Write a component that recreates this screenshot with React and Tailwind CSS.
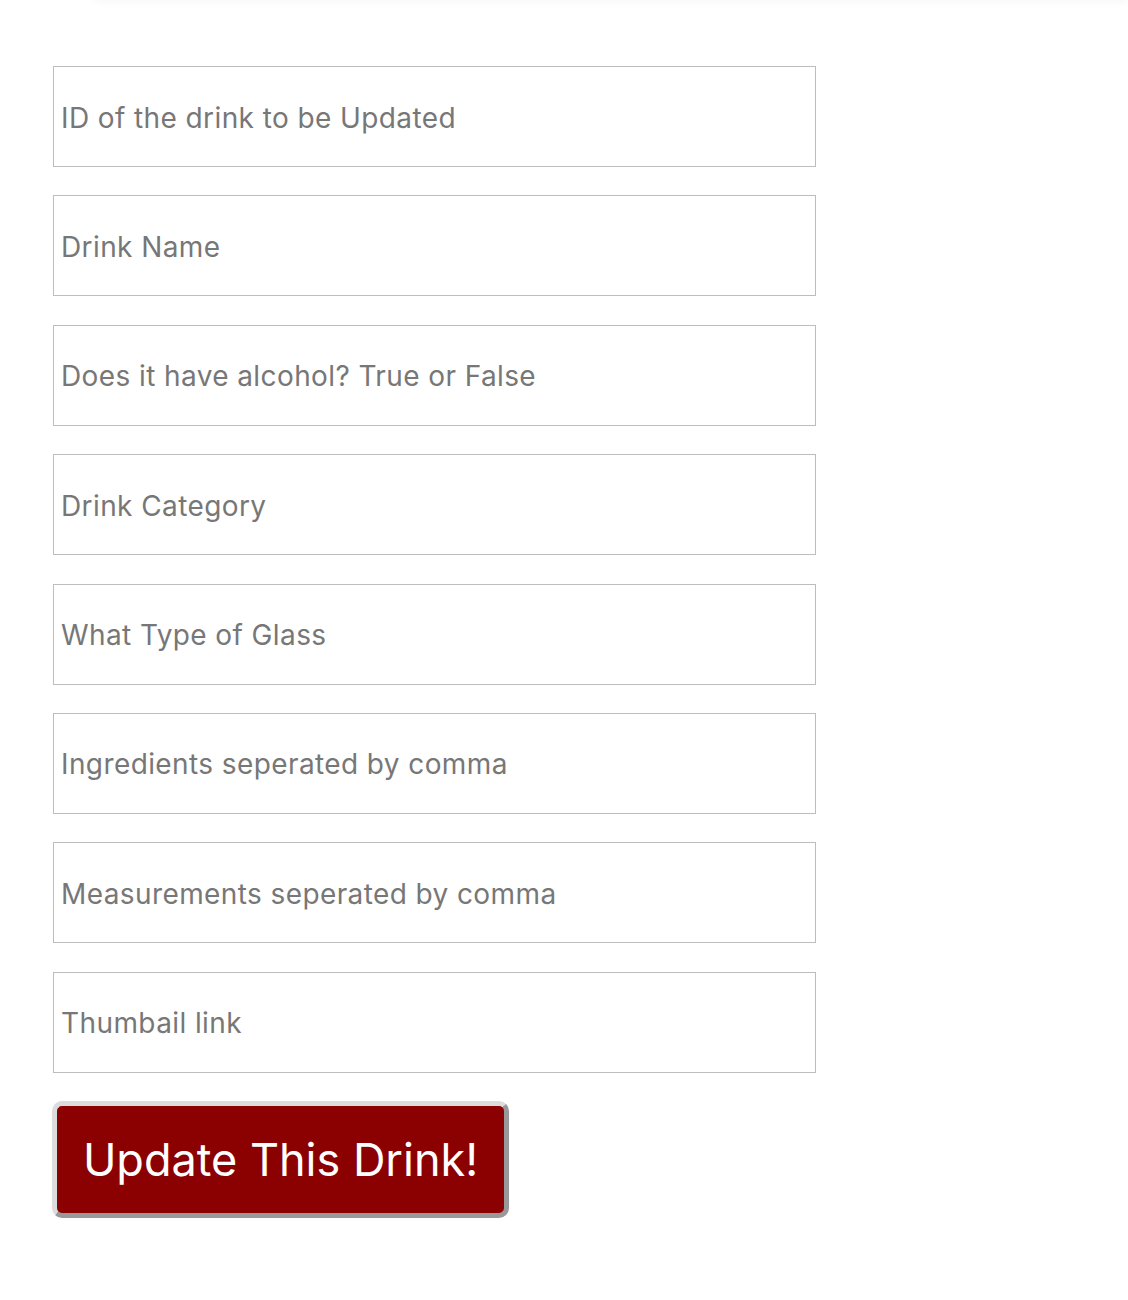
const fields = [
  "ID of the drink to be Updated",
  "Drink Name",
  "Does it have alcohol? True or False",
  "Drink Category",
  "What Type of Glass",
  "Ingredients seperated by comma",
  "Measurements seperated by comma",
  "Thumbail link",
];

export default function App() {
  return (
    <div className="min-h-[1300px] bg-white font-['Inter',sans-serif]">
      <div className="ml-[95px] h-[2px] -mt-[2px] bg-white shadow-[0_0_8px_rgba(0,0,0,0.12)]" />
      <form className="flex flex-col gap-[28.4px] pl-[53px] pt-[66px]">
        {fields.map((f) => (
          <input
            key={f}
            type="text"
            placeholder={f}
            className="h-[101px] w-[763px] border border-[#bdbdbd] bg-white pl-[7px] pr-[8px] pt-[2px] text-[28px] tracking-[0.4px] text-[#666] placeholder:text-[#777] outline-none"
          />
        ))}
        <button
          type="button"
          className="-ml-px h-[117px] w-[457px] rounded-[10px] border-[5px] border-t-[#dcdcdc] border-l-[#dcdcdc] border-b-[#999] border-r-[#999] bg-[#8b0000] text-[45px] text-white"
        >
          Update This Drink!
        </button>
      </form>
    </div>
  );
}
